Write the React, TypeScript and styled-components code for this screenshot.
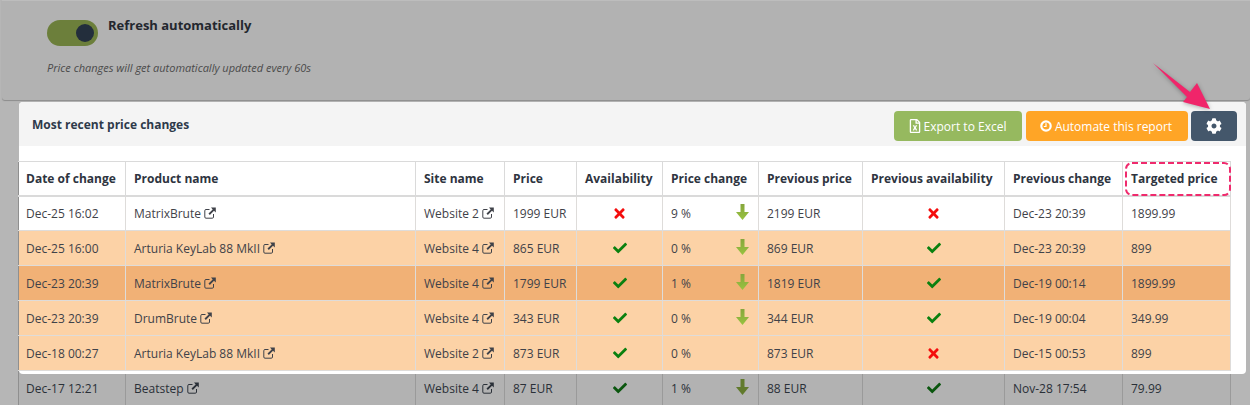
import * as React from 'react';
import styled, { createGlobalStyle } from 'styled-components';
import { FaCheck, FaTimes, FaCog, FaRegFileExcel } from 'react-icons/fa';

interface Row {
	date: string;
	product: string;
	site: string;
	price: string;
	available: boolean;
	change: string;
	falling: boolean;
	prevPrice: string;
	prevAvailable: boolean;
	prevChange: string;
	target: string;
	tone: 'plain' | 'light' | 'strong' | 'dim';
}

const GlobalStyle = createGlobalStyle`
	html, body {
		margin: 0;
		padding: 0;
		background: #b6b6b6;
		overflow: hidden;
	}
	body {
		font-family: "Open Sans", "Liberation Sans", sans-serif;
	}
`;

const Page = styled.div`
	position: relative;
	width: 1250px;
	height: 405px;
	overflow: hidden;
	padding-left: 2px;
	box-sizing: border-box;
`;

const TopPanel = styled.div`
	width: 1248px;
	height: 100px;
	box-sizing: border-box;
	padding: 20px 0 0 45px;
	background: #b2b2b2;
	border-top: 1px solid #bdbdbd;
	border-radius: 0 0 3px 3px;
	box-shadow: 0 1px 1px #8c8c8c;
`;

const ToggleRow = styled.div`
	display: flex;
	align-items: flex-start;
	gap: 10px;
	margin-top: -1px;
`;

const Toggle = styled.div`
	width: 51px;
	height: 26px;
	box-sizing: border-box;
	padding: 4px 4px 0 0;
	display: flex;
	justify-content: flex-end;
	border-radius: 13px;
	background: #6c7f3b;
`;

const Knob = styled.div`
	width: 18px;
	height: 18px;
	border-radius: 50%;
	background: #232e3c;
`;

const ToggleLabel = styled.div`
	font-size: 13px;
	font-weight: 700;
	line-height: 11px;
	color: #23272e;
`;

const Hint = styled.div`
	margin-top: 15px;
	font-size: 11px;
	font-style: italic;
	line-height: 14px;
	color: #4a4a4a;
`;

const Card = styled.div`
	margin: 2px 0 0 17px;
	width: 1227px;
	height: 272px;
	background: #fff;
	border-radius: 4px;
	position: relative;
	z-index: 1;
`;

const CardHeader = styled.div`
	height: 44px;
	box-sizing: border-box;
	padding: 9px 9px 0 13px;
	display: flex;
	align-items: flex-start;
	background: #f4f4f4;
	border-radius: 4px 4px 0 0;
`;

const CardTitle = styled.div`
	flex: 1;
	font-size: 12px;
	font-weight: 700;
	line-height: 28px;
	color: #2e3a4a;
`;

const Actions = styled.div`
	display: flex;
	gap: 4px;
`;

const ActionButton = styled.div<{ $bg: string; $width: number }>`
	width: ${(p) => p.$width}px;
	height: 30px;
	box-sizing: border-box;
	padding-right: 2px;
	display: flex;
	align-items: center;
	justify-content: center;
	gap: 2px;
	border-radius: 4px;
	background: ${(p) => p.$bg};
	color: #fff;
	font-size: 12px;
`;

const SettingsButton = styled(ActionButton)`
	margin-left: -1px;
	padding-right: 0;
`;

const ClockIcon = styled.svg`
	width: 12px;
	height: 12px;
	margin-right: 1px;
`;

const TableWrap = styled.div`
	margin: 15px 0 0 -1px;
`;

const DimWrap = styled.div`
	margin: -4px 0 0 16px;
`;

const Table = styled.table<{ $dim?: boolean }>`
	border-collapse: collapse;
	table-layout: fixed;
	width: 1212px;
	font-size: 12px;
	color: ${(p) => (p.$dim ? '#2a3038' : '#3f4249')};
`;

const HeadCell = styled.th`
	position: relative;
	height: 34px;
	padding: 0 0 0 8px;
	box-sizing: border-box;
	text-align: left;
	font-size: 12px;
	font-weight: 700;
	white-space: nowrap;
	color: #2e3440;
	background: #fff;
	border: 1px solid #dadada;
	border-bottom: 2px solid #dadada;

	&:first-child {
		padding-left: 7px;
		border-left-color: #8f8f8f;
	}
`;

const TONES = {
	plain: '#fff',
	light: '#fcd2a6',
	strong: '#f1b176',
	dim: '#b2b2b2',
};

const Cell = styled.td<{ $tone: Row['tone']; $center?: boolean }>`
	height: 35px;
	padding: 0 0 0 8px;
	box-sizing: border-box;
	white-space: nowrap;
	background: ${(p) => TONES[p.$tone]};
	text-align: ${(p) => (p.$center ? 'center' : 'left')};
	border: 1px solid ${(p) => (p.$tone === 'dim' ? '#9a9a9a' : '#dedcda')};
	${(p) => (p.$center ? 'padding-left: 0;' : '')}

	&:first-child {
		padding-left: 7px;
		border-left-color: #8f8f8f;
	}
`;

const ChangeCell = styled.div`
	display: flex;
	align-items: center;
	justify-content: space-between;
	padding-right: 9px;
`;

const FallArrow = styled.svg`
	width: 13px;
	height: 16px;
	margin-top: -3px;
`;

const StatusCheck = styled(FaCheck)<{ $dim: boolean }>`
	width: 14px;
	height: 14px;
	vertical-align: -2px;
	color: ${(p) => (p.$dim ? '#0a560e' : '#0a800f')};
`;

const StatusCross = styled(FaTimes)`
	width: 15px;
	height: 15px;
	vertical-align: -3px;
	color: #f40d0d;
`;

const LinkIcon = styled.svg`
	width: 12px;
	height: 12px;
	margin-left: 3px;
	vertical-align: -1px;
`;

const TargetMark = styled.svg`
	position: absolute;
	left: 2px;
	top: 0;
`;

const PointerArrow = styled.svg`
	position: absolute;
	left: 1140px;
	top: 55px;
	z-index: 2;
	filter: drop-shadow(0 1px 2px rgba(0, 0, 0, 0.3));
`;

const COLUMNS = [107, 290, 89, 72, 86, 96, 104, 142, 118, 108];

const ROWS: Row[] = [
	{ date: 'Dec-25 16:02', product: 'MatrixBrute', site: 'Website 2', price: '1999 EUR', available: false, change: '9 %', falling: true, prevPrice: '2199 EUR', prevAvailable: false, prevChange: 'Dec-23 20:39', target: '1899.99', tone: 'plain' },
	{ date: 'Dec-25 16:00', product: 'Arturia KeyLab 88 MkII', site: 'Website 4', price: '865 EUR', available: true, change: '0 %', falling: true, prevPrice: '869 EUR', prevAvailable: true, prevChange: 'Dec-23 20:39', target: '899', tone: 'light' },
	{ date: 'Dec-23 20:39', product: 'MatrixBrute', site: 'Website 4', price: '1799 EUR', available: true, change: '1 %', falling: true, prevPrice: '1819 EUR', prevAvailable: true, prevChange: 'Dec-19 00:14', target: '1899.99', tone: 'strong' },
	{ date: 'Dec-23 20:39', product: 'DrumBrute', site: 'Website 4', price: '343 EUR', available: true, change: '0 %', falling: true, prevPrice: '344 EUR', prevAvailable: true, prevChange: 'Dec-19 00:04', target: '349.99', tone: 'light' },
	{ date: 'Dec-18 00:27', product: 'Arturia KeyLab 88 MkII', site: 'Website 2', price: '873 EUR', available: true, change: '0 %', falling: false, prevPrice: '873 EUR', prevAvailable: false, prevChange: 'Dec-15 00:53', target: '899', tone: 'light' },
];

const DIM_ROW: Row = { date: 'Dec-17 12:21', product: 'Beatstep', site: 'Website 4', price: '87 EUR', available: true, change: '1 %', falling: true, prevPrice: '88 EUR', prevAvailable: true, prevChange: 'Nov-28 17:54', target: '79.99', tone: 'dim' };

const HEADERS = ['Date of change', 'Product name', 'Site name', 'Price', 'Availability', 'Price change', 'Previous price', 'Previous availability', 'Previous change'];

const ExternalLink = () => (
	<LinkIcon viewBox="0 0 12 12">
		<path d="M5.5 2.5H2a1.2 1.2 0 0 0-1.2 1.2V10A1.2 1.2 0 0 0 2 11.2h6.3A1.2 1.2 0 0 0 9.5 10V7" fill="none" stroke="currentColor" strokeWidth="1" />
		<path d="M7 .6h4.8v4.8L10 3.7 5.8 7.9 4.5 6.6l4.2-4.2z" fill="currentColor" />
	</LinkIcon>
);

const DownArrow = ({ dim }: { dim: boolean }) => (
	<FallArrow viewBox="0 0 13 16">
		<defs>
			<linearGradient id="fall" x1="0" y1="0" x2="0" y2="1">
				<stop offset="0" stopColor="#86a63c" />
				<stop offset="1" stopColor="#98c340" />
			</linearGradient>
		</defs>
		<path d="M4.5 0h4v8H13l-6.5 8L0 8h4.5z" fill={dim ? '#617a2c' : 'url(#fall)'} />
	</FallArrow>
);

const Status = ({ ok, dim }: { ok: boolean; dim: boolean }) => (ok ? <StatusCheck $dim={dim} /> : <StatusCross />);

const DataRow = ({ row }: { row: Row }) => {
	const dim = row.tone === 'dim';
	return (
		<tr>
			<Cell $tone={row.tone}>{row.date}</Cell>
			<Cell $tone={row.tone}>{row.product}<ExternalLink /></Cell>
			<Cell $tone={row.tone}>{row.site}<ExternalLink /></Cell>
			<Cell $tone={row.tone}>{row.price}</Cell>
			<Cell $tone={row.tone} $center><Status ok={row.available} dim={dim} /></Cell>
			<Cell $tone={row.tone}>
				<ChangeCell>
					{row.change}
					{row.falling && <DownArrow dim={dim} />}
				</ChangeCell>
			</Cell>
			<Cell $tone={row.tone}>{row.prevPrice}</Cell>
			<Cell $tone={row.tone} $center><Status ok={row.prevAvailable} dim={dim} /></Cell>
			<Cell $tone={row.tone}>{row.prevChange}</Cell>
			<Cell $tone={row.tone}>{row.target}</Cell>
		</tr>
	);
};

const Columns = () => (
	<colgroup>
		{COLUMNS.map((w, i) => <col key={i} width={w} />)}
	</colgroup>
);

export default function App() {
	return (
		<Page>
			<GlobalStyle />
			<TopPanel>
				<ToggleRow>
					<Toggle><Knob /></Toggle>
					<ToggleLabel>Refresh automatically</ToggleLabel>
				</ToggleRow>
				<Hint>Price changes will get automatically updated every 60s</Hint>
			</TopPanel>
			<Card>
				<CardHeader>
					<CardTitle>Most recent price changes</CardTitle>
					<Actions>
						<ActionButton $bg="#96b95f" $width={128}><FaRegFileExcel size={14} />Export to Excel</ActionButton>
						<ActionButton $bg="#ffa526" $width={162}>
							<ClockIcon viewBox="0 0 12 12">
								<circle cx="6" cy="6" r="4.7" fill="none" stroke="currentColor" strokeWidth="2.2" />
								<path d="M6 3.2v3.3H3.8" fill="none" stroke="currentColor" strokeWidth="1.2" />
							</ClockIcon>
							Automate this report
						</ActionButton>
						<SettingsButton $bg="#44576b" $width={46}><FaCog size={16} /></SettingsButton>
					</Actions>
				</CardHeader>
				<TableWrap>
					<Table>
						<Columns />
						<thead>
							<tr>
								{HEADERS.map((h) => <HeadCell key={h}>{h}</HeadCell>)}
								<HeadCell>
									Targeted price
									<TargetMark width="106" height="34" viewBox="0 0 106 34">
										<rect x="1" y="1" width="104" height="32" rx="6" fill="none" stroke="#ef2a6d" strokeWidth="2" strokeDasharray="6 3" />
									</TargetMark>
								</HeadCell>
							</tr>
						</thead>
						<tbody>
							{ROWS.map((row, i) => <DataRow key={i} row={row} />)}
						</tbody>
					</Table>
				</TableWrap>
			</Card>
			<DimWrap>
				<Table $dim>
					<Columns />
					<tbody>
						<DataRow row={DIM_ROW} />
					</tbody>
				</Table>
			</DimWrap>
			<PointerArrow width="100" height="70" viewBox="0 0 100 70">
				<path d="M13 8 L50 37 L57 28 L70 54 L43 47 L47 42 Z" fill="#f0256a" />
			</PointerArrow>
		</Page>
	);
}
